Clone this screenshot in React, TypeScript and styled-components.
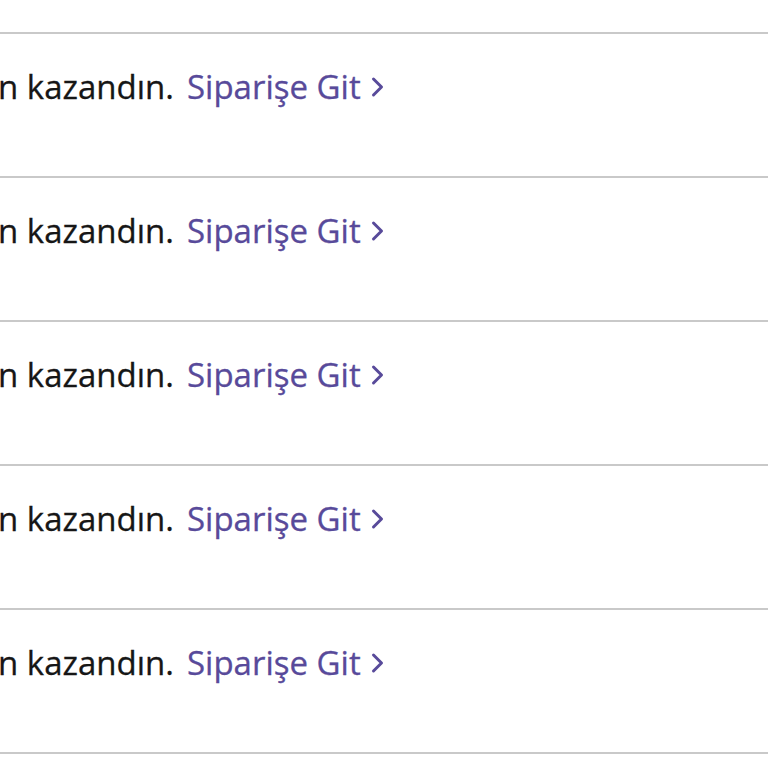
import React from "react";
import styled, { createGlobalStyle } from "styled-components";

const Global = createGlobalStyle`
  html, body { margin: 0; padding: 0; background: #ffffff; }
  body { width: 768px; height: 768px; overflow: hidden; }
`;

const List = styled.div`
  display: flex;
  flex-direction: column;
  padding-top: 32px;
`;

const Row = styled.div`
  height: 144px;
  box-sizing: border-box;
  border-top: 2px solid #c9c9c9;
  display: flex;
  align-items: flex-start;
  padding-top: 33px;
  font-family: "Open Sans", "Noto Sans", sans-serif;
  font-size: 33px;
  line-height: 40px;
  -webkit-text-stroke: 0.3px currentColor;
  margin-left: -2px;
  &:last-child { border-bottom: 2px solid #c9c9c9; height: 146px; }
`;

const Message = styled.span`
  color: #161616;
  white-space: nowrap;
`;

const Link = styled.a`
  color: #584a9a;
  text-decoration: none;
  margin-left: 13px;
  display: inline-flex;
  align-items: center;
  gap: 9px;
  white-space: nowrap;
`;

const Chevron = () => (
  <svg width="15" height="22" viewBox="0 0 15 22" fill="none">
    <path d="M3.5 3 L11.5 11 L3.5 19" stroke="#584a9a" strokeWidth="3" strokeLinecap="round" strokeLinejoin="round" />
  </svg>
);

export default function App() {
  const rows = [0, 1, 2, 3, 4];
  return (
    <>
      <Global />
      <List>
        {rows.map((i) => (
          <Row key={i}>
            <Message>n kazandın.</Message>
            <Link href="#">
              Siparişe Git
              <Chevron />
            </Link>
          </Row>
        ))}
      </List>
    </>
  );
}
